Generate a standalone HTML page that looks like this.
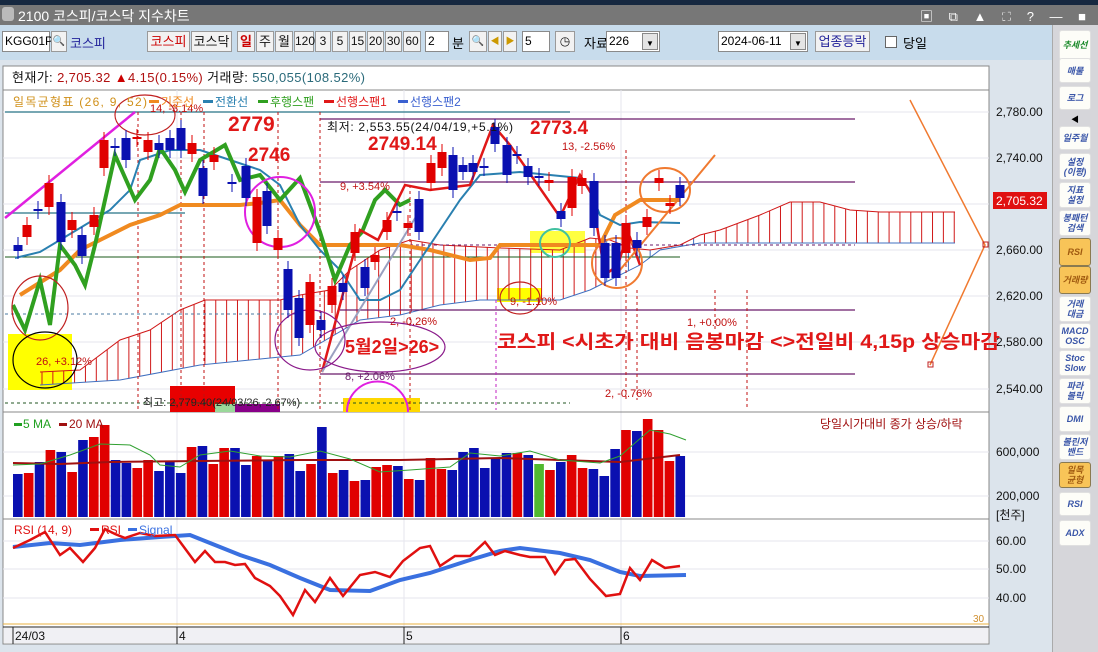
<!DOCTYPE html>
<html><head><meta charset="utf-8">
<style>
*{margin:0;padding:0;box-sizing:border-box}
body{width:1098px;height:652px;overflow:hidden;background:#dce4ec;font-family:"Liberation Sans","Noto Sans CJK KR",sans-serif;font-size:12px;position:relative}
.abs{position:absolute}
.btn{position:absolute;top:31px;height:21px;background:#f2f2f2;border:1px solid #9a9a9a;font-size:12px;line-height:19px;text-align:center;color:#111}
.inp{position:absolute;top:31px;height:21px;background:#fff;border:1px solid #8a8a8a;font-size:12px;line-height:19px;padding-left:2px}
.sb{position:absolute;left:1059px;width:32px;background:#fdfdf8;border:1px solid #e0e0e0;border-radius:3px;font-size:9px;font-style:italic;color:#3a56a8;text-align:center;line-height:10px;display:flex;align-items:center;justify-content:center;font-weight:bold}
.sb.on{background:#f8c458;border-color:#8a7a50;color:#a05a10}
</style></head><body>
<div class="abs" style="left:0;top:0;width:1098px;height:5px;background:#162840"></div>
<div class="abs" style="left:0;top:5px;width:1098px;height:20px;background:#777"></div>
<div class="abs" style="left:2px;top:7px;width:12px;height:14px;background:#bbb;border-radius:3px"></div>
<div class="abs" style="left:18px;top:6px;color:#fff;font-size:14px">2100 코스피/코스닥 지수차트</div>
<div class="abs" style="left:920px;top:6px;color:#fff;font-size:13px;letter-spacing:6px">▣ ⧉ ▲ ⛶ ? — ■ ✕</div>
<div class="abs" style="left:0;top:25px;width:1055px;height:35px;background:#c8dcec"></div>
<div class="inp" style="left:2px;width:48px">KGG01P</div>
<div class="btn" style="left:51px;width:16px;font-size:10px">🔍</div>
<div class="abs" style="left:70px;top:33px;color:#22229a;font-size:13px">코스피</div>
<div class="btn" style="left:147px;width:43px;color:#c00;font-size:13px">코스피</div>
<div class="btn" style="left:191px;width:41px;font-size:13px">코스닥</div>
<div class="btn" style="left:237px;width:18px;color:#c00;font-weight:bold;font-size:13px">일</div>
<div class="btn" style="left:256px;width:18px;font-size:13px">주</div>
<div class="btn" style="left:275px;width:18px;font-size:13px">월</div>
<div class="btn" style="left:294px;width:20px">120</div>
<div class="btn" style="left:315px;width:16px">3</div>
<div class="btn" style="left:332px;width:16px">5</div>
<div class="btn" style="left:349px;width:17px">15</div>
<div class="btn" style="left:367px;width:17px">20</div>
<div class="btn" style="left:385px;width:17px">30</div>
<div class="btn" style="left:403px;width:18px">60</div>
<div class="inp" style="left:425px;width:24px">2</div>
<div class="abs" style="left:452px;top:33px;font-size:13px">분</div>
<div class="btn" style="left:469px;width:18px;font-size:10px">🔍</div>
<div class="btn" style="left:488px;width:14px;color:#c90;font-size:9px">◀</div>
<div class="btn" style="left:503px;width:14px;color:#c90;font-size:9px">▶</div>
<div class="inp" style="left:522px;width:28px">5</div>
<div class="btn" style="left:555px;width:20px">◷</div>
<div class="abs" style="left:584px;top:33px;font-size:13px">자료</div>
<div class="inp" style="left:606px;width:54px">226<span style="position:absolute;right:1px;top:1px;width:16px;height:17px;background:#e4e4e4;border:1px solid #888;font-size:8px;text-align:center">▼</span></div>
<div class="inp" style="left:718px;width:90px">2024-06-11<span style="position:absolute;right:1px;top:1px;width:16px;height:17px;background:#e4e4e4;border:1px solid #888;font-size:8px;text-align:center">▼</span></div>
<div class="btn" style="left:815px;width:55px;color:#22229a;font-size:13px">업종등락</div>
<div class="abs" style="left:885px;top:36px;width:12px;height:12px;background:#fff;border:1px solid #666"></div>
<div class="abs" style="left:903px;top:33px;font-size:13px">당일</div>

<div class="abs" style="left:1052px;top:25px;width:46px;height:627px;background:#d6d6da;border-left:1px solid #aaa"></div>
<div class="sb" style="top:30px;height:30px;color:#1a8a2a">추세선</div>
<div class="sb" style="top:58px;height:25px">매물</div>
<div class="sb" style="top:86px;height:24px">로그</div>
<div class="abs" style="left:1071px;top:114px;font-size:8px">◀</div>
<div class="sb" style="top:126px;height:24px">일주월</div>
<div class="sb" style="top:153px;height:27px">설정<br>(이평)</div>
<div class="sb" style="top:182px;height:26px">지표<br>설정</div>
<div class="sb" style="top:210px;height:26px">봉패턴<br>검색</div>
<div class="sb on" style="top:238px;height:28px">RSI</div>
<div class="sb on" style="top:266px;height:28px">거래량</div>
<div class="sb" style="top:296px;height:26px">거래<br>대금</div>
<div class="sb" style="top:323px;height:26px">MACD<br>OSC</div>
<div class="sb" style="top:350px;height:26px">Stoc<br>Slow</div>
<div class="sb" style="top:378px;height:26px">파라<br>볼릭</div>
<div class="sb" style="top:406px;height:26px">DMI</div>
<div class="sb" style="top:434px;height:26px">볼린저<br>밴드</div>
<div class="sb on" style="top:462px;height:26px">일목<br>균형</div>
<div class="sb" style="top:492px;height:24px">RSI</div>
<div class="sb" style="top:520px;height:26px">ADX</div>

<svg class="abs" style="left:0;top:0" width="1052" height="652" font-family="Liberation Sans, Noto Sans CJK KR, sans-serif">
<rect x="3" y="66" width="986" height="578" fill="#fff" stroke="#888"/>
<line x1="3" y1="90" x2="989" y2="90" stroke="#888"/>
<text x="12" y="82" font-size="13" fill="#111" textLength="353">현재가: <tspan fill="#b01010">2,705.32</tspan>   <tspan fill="#c00">▲</tspan><tspan fill="#b01010">4.15(0.15%)</tspan>   거래량: <tspan fill="#2a6a7a">550,055(108.52%)</tspan></text>
<g stroke="#e6e6ee" stroke-width="1">
<line x1="3" y1="112" x2="989" y2="112"/><line x1="3" y1="158" x2="989" y2="158"/><line x1="3" y1="204" x2="989" y2="204"/><line x1="3" y1="250" x2="989" y2="250"/><line x1="3" y1="296" x2="989" y2="296"/><line x1="3" y1="342" x2="989" y2="342"/><line x1="3" y1="389" x2="989" y2="389"/>
<line x1="3" y1="452" x2="989" y2="452"/><line x1="3" y1="496" x2="989" y2="496"/>
<line x1="3" y1="541" x2="989" y2="541"/><line x1="3" y1="569" x2="989" y2="569"/><line x1="3" y1="598" x2="989" y2="598"/>
<line x1="177" y1="90" x2="177" y2="626"/><line x1="404" y1="90" x2="404" y2="626"/><line x1="621" y1="90" x2="621" y2="626"/>
</g>
<line x1="3" y1="412" x2="989" y2="412" stroke="#888"/>
<line x1="3" y1="519" x2="989" y2="519" stroke="#888"/>
<line x1="3" y1="624" x2="989" y2="624" stroke="#e8b040"/>
<line x1="3" y1="627" x2="989" y2="627" stroke="#222"/>
<rect x="4" y="628" width="984" height="15" fill="#f0f0f4"/>
<g font-size="12" fill="#111"><text x="15" y="640">24/03</text><text x="179" y="640">4</text><text x="406" y="640">5</text><text x="623" y="640">6</text></g>
<g stroke="#222"><line x1="13" y1="627" x2="13" y2="644"/><line x1="177" y1="627" x2="177" y2="644"/><line x1="404" y1="627" x2="404" y2="644"/><line x1="621" y1="627" x2="621" y2="644"/></g>

<g font-size="12" fill="#111">
<text x="996" y="116">2,780.00</text><text x="996" y="162">2,740.00</text><text x="996" y="254">2,660.00</text><text x="996" y="300">2,620.00</text><text x="996" y="346">2,580.00</text><text x="996" y="393">2,540.00</text>
<text x="996" y="456">600,000</text><text x="996" y="500">200,000</text><text x="996" y="519">[천주]</text>
<text x="996" y="545">60.00</text><text x="996" y="573">50.00</text><text x="996" y="602">40.00</text>
</g>
<rect x="993" y="192" width="54" height="17" fill="#e01010"/>
<text x="996" y="205" font-size="12" fill="#fff">2,705.32</text>
<text x="973" y="622" font-size="10" fill="#d09030">30</text>

<rect x="8" y="334" width="64" height="56" fill="#ffff00"/>
<rect x="530" y="231" width="55" height="22" fill="#ffff40"/>
<rect x="497" y="288" width="45" height="14" fill="#ffff00"/>
<rect x="343" y="398" width="77" height="14" fill="#ffd800"/>
<rect x="170" y="386" width="65" height="26" fill="#e80000"/>
<rect x="215" y="404" width="20" height="8" fill="#9ad89a"/>
<rect x="235" y="404" width="45" height="8" fill="#880088"/>

<g id="cloud"></g>
<g stroke="#6a1a6a" stroke-width="1.2">
<line x1="320" y1="119" x2="855" y2="119"/><line x1="320" y1="182" x2="855" y2="182"/><line x1="340" y1="310" x2="855" y2="310"/><line x1="320" y1="374" x2="855" y2="374"/>
</g>
<line x1="5" y1="257" x2="680" y2="257" stroke="#1a5a1a"/>
<line x1="5" y1="112" x2="570" y2="112" stroke="#4a8a9a" stroke-width="1.5"/>
<line x1="5" y1="213" x2="185" y2="213" stroke="#4a8a9a" stroke-width="1.5"/>
<line x1="5" y1="403" x2="570" y2="403" stroke="#225522" stroke-dasharray="3,3"/>
<line x1="5" y1="314" x2="300" y2="314" stroke="#4a7aa0" stroke-dasharray="3,3"/>
<line x1="320" y1="245" x2="855" y2="245" stroke="#6a1a6a" stroke-dasharray="3,3"/>
<g stroke="#c01010" stroke-dasharray="3,3">
<line x1="138" y1="112" x2="138" y2="410"/><line x1="181" y1="112" x2="181" y2="410"/><line x1="204" y1="112" x2="204" y2="410"/><line x1="278" y1="112" x2="278" y2="410"/><line x1="320" y1="112" x2="320" y2="410"/><line x1="410" y1="185" x2="410" y2="410"/><line x1="626" y1="150" x2="626" y2="400"/><line x1="637" y1="290" x2="637" y2="400"/><line x1="715" y1="290" x2="715" y2="330"/><line x1="747" y1="290" x2="747" y2="410"/>
</g>
<line x1="496" y1="300" x2="496" y2="410" stroke="#c020c0" stroke-dasharray="3,3"/>
<polyline fill="none" stroke="#f08a20" stroke-width="4" points="20,295 60,270 80,250 100,240 130,225 160,215 180,205 210,205 240,205 260,203 280,200 300,225 320,245 360,245 400,245 430,250 470,260 490,258 500,245 560,245 600,245 615,215 640,200 680,200"/>
<polyline fill="none" stroke="#2a80b0" stroke-width="2" points="15,258 40,252 60,240 80,228 110,210 130,190 140,160 170,150 200,150 230,160 260,170 280,185 300,225 320,250 340,270 360,300 380,300 400,290 420,260 440,230 460,200 480,175 520,172 550,175 580,178 590,190 600,215 620,225 640,222 680,223"/>
<polyline fill="none" stroke="#30a020" stroke-width="4" points="13,305 25,330 40,280 50,325 60,245 75,265 85,285 95,245 115,155 135,200 150,180 160,148 175,170 185,192 200,160 225,145 240,180 260,175 280,200 300,178 320,232 335,280 350,245 362,232 375,200 385,190 400,205 410,200"/>
<line x1="5" y1="218" x2="135" y2="112" stroke="#e020e0" stroke-width="2.5"/>
<polyline fill="none" stroke="#e01818" stroke-width="2.5" points="322,372 360,230 378,240 405,185 430,190 470,185 493,125 510,145 560,217 580,175 592,195 605,275 618,265 628,232 640,265"/>
<line x1="322" y1="372" x2="420" y2="210" stroke="#9aa0c0" stroke-width="2"/>
<polyline fill="none" stroke="#f07a30" stroke-width="2" points="620,270 715,155"/>
<polyline fill="none" stroke="#f07a30" stroke-width="1.5" points="910,100 985,245 930,365"/>
<rect x="983" y="242" width="5" height="5" fill="none" stroke="#c02020"/>
<rect x="928" y="362" width="5" height="5" fill="none" stroke="#c02020"/>
<g fill="none" stroke-width="1.2">
<ellipse cx="40" cy="308" rx="28" ry="32" stroke="#c02020"/>
<ellipse cx="45" cy="360" rx="32" ry="28" stroke="#000"/>
<ellipse cx="145" cy="115" rx="30" ry="20" stroke="#c02020"/>
<ellipse cx="280" cy="212" rx="35" ry="35" stroke="#e020e0" stroke-width="2"/>
<ellipse cx="555" cy="243" rx="15" ry="14" stroke="#40c0a0" stroke-width="2"/>
<ellipse cx="520" cy="298" rx="20" ry="16" stroke="#c02020"/>
<ellipse cx="617" cy="263" rx="25" ry="25" stroke="#f07a30" stroke-width="2"/>
<ellipse cx="665" cy="190" rx="25" ry="22" stroke="#f07a30" stroke-width="2"/>
<ellipse cx="310" cy="340" rx="35" ry="30" stroke="#8a1a8a"/>
<ellipse cx="380" cy="347" rx="65" ry="25" stroke="#8a1a8a"/>
<path d="M347,412 A30,30 0 0 1 408,412" stroke="#e020e0" stroke-width="2"/>
</g>
<g id="candles"></g>
<g font-size="11" fill="#c01010">
<text x="150" y="112">14, -3.14%</text><text x="340" y="190">9, +3.54%</text><text x="562" y="150">13, -2.56%</text><text x="36" y="365">26, +3.12%</text><text x="510" y="305">9, -1.10%</text><text x="390" y="325">2, -0.26%</text><text x="605" y="397">2, -0.76%</text><text x="687" y="326">1, +0.00%</text><text x="345" y="380" fill="#6a1a6a">8, +2.06%</text>
<text x="143" y="406" fill="#222">최고: 2,779.40(24/03/26,-2.67%)</text>
</g>
<text x="327" y="131" font-size="12" fill="#111" textLength="186">최저: 2,553.55(24/04/19,+5.1%)</text>
<g font-weight="bold" fill="#e01818">
<text x="228" y="131" font-size="21">2779</text><text x="248" y="161" font-size="19">2746</text><text x="368" y="150" font-size="19">2749.14</text><text x="530" y="134" font-size="19">2773.4</text>
<text x="345" y="353" font-size="18">5월2일&gt;26&gt;</text>
<text x="497" y="348" font-size="19" textLength="503" lengthAdjust="spacingAndGlyphs">코스피 &lt;시초가 대비 음봉마감 &lt;&gt;전일비 4,15p 상승마감</text>
</g>
<g font-size="12">
<text x="13" y="106" fill="#d0901a" textLength="134">일목균형표 (26, 9, 52)</text>
<rect x="149" y="100" width="10" height="3" fill="#f08a20"/><text x="161" y="106" fill="#f08a20">기준선</text>
<rect x="203" y="100" width="10" height="3" fill="#2a80b0"/><text x="215" y="106" fill="#2a80b0">전환선</text>
<rect x="258" y="100" width="10" height="3" fill="#30a020"/><text x="270" y="106" fill="#30a020">후행스팬</text>
<rect x="324" y="100" width="10" height="3" fill="#e01818"/><text x="336" y="106" fill="#e01818">선행스팬1</text>
<rect x="398" y="100" width="10" height="3" fill="#3a60d0"/><text x="410" y="106" fill="#3a60d0">선행스팬2</text>
</g>
<g id="vol"></g>
<polyline fill="none" stroke="#a01010" stroke-width="2" points="13,463 60,464 110,462 200,461 300,460 400,460 500,458 560,460 620,462 680,455"/>
<polyline fill="none" stroke="#30a030" stroke-width="1" points="13,465 40,464 70,455 100,444 130,445 150,455 160,465 180,467 200,455 230,451 260,456 290,457 320,451 350,459 380,472 410,470 450,467 470,453 500,456 530,451 560,460 600,463 620,456 650,430 670,434 686,440"/>
<g font-size="12"><rect x="14" y="423" width="8" height="3" fill="#20a020"/><text x="23" y="428" fill="#20a020">5 MA</text><rect x="59" y="423" width="8" height="3" fill="#a01010"/><text x="69" y="428" fill="#a01010">20 MA</text></g>
<text x="820" y="428" font-size="12" fill="#a01010">당일시가대비 종가 상승/하락</text>
<polyline fill="none" stroke="#3a70e0" stroke-width="4" points="13,547 50,543 80,545 120,540 160,537 190,535 215,545 240,555 270,565 300,578 330,590 370,591 400,580 430,573 470,560 500,551 520,548 560,553 590,560 620,572 640,576 686,575"/>
<polyline fill="none" stroke="#e01010" stroke-width="2.5" points="13,548 30,540 45,532 60,555 70,548 83,562 95,548 105,529 115,534 125,538 140,533 155,536 175,535 195,562 205,551 215,562 225,562 235,565 245,564 255,578 270,586 280,596 293,615 305,590 315,602 330,578 343,596 360,575 375,572 390,577 403,561 420,548 430,546 440,566 455,556 470,556 485,542 495,555 505,551 520,555 530,557 545,557 555,574 565,560 575,559 590,579 606,596 620,594 630,568 640,580 652,560 665,568 680,566"/>
<g font-size="12"><text x="14" y="534" fill="#e01010">RSI (14, 9)</text><rect x="90" y="528" width="9" height="3" fill="#e01010"/><text x="101" y="534" fill="#e01010">RSI</text><rect x="128" y="528" width="9" height="3" fill="#3a70e0"/><text x="139" y="534" fill="#3a70e0">Signal</text></g>
</svg>
<script>
(function(){
var NS="http://www.w3.org/2000/svg";
function el(p,t,a){var e=document.createElementNS(NS,t);for(var k in a)e.setAttribute(k,a[k]);p.appendChild(e);return e;}
var C=[[18,'b',245,251],[27,'r',225,237],[38,'b',209,211],[49,'r',183,207],[61,'b',202,242],[72,'r',220,230],[82,'b',235,256],[94,'r',215,227],[104,'r',140,168],[115,'b',146,148],[126,'b',138,160],[137,'r',137,139],[148,'r',140,152],[159,'b',143,150],[170,'b',138,150],[181,'b',128,150],[192,'r',143,154],[203,'b',168,196],[214,'r',155,162],[232,'b',182,184],[246,'b',166,198],[257,'r',197,243],[267,'b',191,226],[278,'r',238,250],[288,'b',269,310],[299,'b',298,338],[310,'r',282,325],[321,'b',320,330],[332,'r',286,305],[343,'b',283,292],[355,'r',232,253],[365,'b',267,288],[375,'r',255,262],[387,'r',220,232],[397,'b',211,213],[408,'r',223,228],[419,'b',199,232],[431,'r',163,183],[442,'r',152,168],[453,'b',155,190],[463,'b',165,172],[473,'b',163,172],[484,'b',166,168],[495,'b',127,144],[507,'b',145,175],[517,'b',154,156],[528,'b',166,177],[539,'b',176,178],[549,'r',180,183],[561,'b',211,219],[572,'r',177,208],[582,'r',178,186],[594,'b',181,228],[605,'b',243,278],[616,'b',243,278],[626,'r',223,253],[637,'b',240,248],[647,'r',217,227],[659,'r',178,183],[670,'r',203,206],[680,'b',185,198]];
var g=document.getElementById('candles');
C.forEach(function(c){var col=c[1]=='r'?'#e00000':'#0a10b0';el(g,'line',{x1:c[0],x2:c[0],y1:c[2]-8,y2:c[3]+8,stroke:col});el(g,'rect',{x:c[0]-4.5,y:c[2],width:9,height:Math.max(2,c[3]-c[2]),fill:col});});
var V=[['b',474],['r',473],['b',462],['r',450],['b',452],['r',472],['b',440],['r',437],['r',425],['b',460],['b',463],['r',468],['r',460],['b',471],['b',462],['b',473],['r',447],['b',446],['r',464],['r',448],['b',448],['b',465],['r',456],['b',460],['r',456],['b',454],['b',471],['r',464],['b',427],['r',473],['b',470],['r',481],['b',480],['r',467],['r',465],['b',466],['r',479],['b',480],['r',458],['r',469],['b',470],['b',452],['b',448],['b',468],['b',459],['b',453],['r',453],['b',455],['g',464],['r',470],['b',462],['r',455],['r',468],['b',469],['b',476],['b',449],['r',430],['b',431],['r',419],['r',430],['r',461],['b',456]];
var gv=document.getElementById('vol');
V.forEach(function(v,i){var x=13+i*10.86;el(gv,'rect',{x:x,y:v[1],width:9.6,height:517-v[1],fill:v[0]=='r'?'#e00000':v[0]=='b'?'#0a10b0':'#50b830'});});
var topP=[[40,372],[80,370],[120,340],[150,330],[180,310],[205,300],[240,300],[280,300],[300,295],[330,290],[350,270],[380,250],[410,240],[440,245],[500,248],[560,250],[590,238],[610,240],[630,248],[650,250],[680,245],[700,235],[720,230],[760,215],[790,202],[820,202],[850,210],[880,212],[955,212]];
var botP=[[40,385],[120,380],[200,365],[300,355],[360,320],[400,315],[440,305],[480,300],[560,300],[590,290],[610,280],[640,265],[660,250],[700,243],[955,243]];
function interp(a,x){for(var i=0;i<a.length-1;i++){if(x>=a[i][0]&&x<=a[i+1][0]){var t=(x-a[i][0])/(a[i+1][0]-a[i][0]);return a[i][1]+t*(a[i+1][1]-a[i][1]);}}return a[a.length-1][1];}
var gc=document.getElementById('cloud');
for(var x=42;x<=955;x+=10.86){var a=interp(topP,x),b=interp(botP,x);el(gc,'line',{x1:x,x2:x,y1:a,y2:b,stroke:(x>596&&x<700)?'#4070c0':'#d01818','stroke-width':1});}
el(gc,'polyline',{points:topP.map(function(p){return p.join(',')}).join(' '),fill:'none',stroke:'#d01818'});
el(gc,'polyline',{points:botP.map(function(p){return p.join(',')}).join(' '),fill:'none',stroke:'#4070c0'});
})();
</script>
</body></html>
